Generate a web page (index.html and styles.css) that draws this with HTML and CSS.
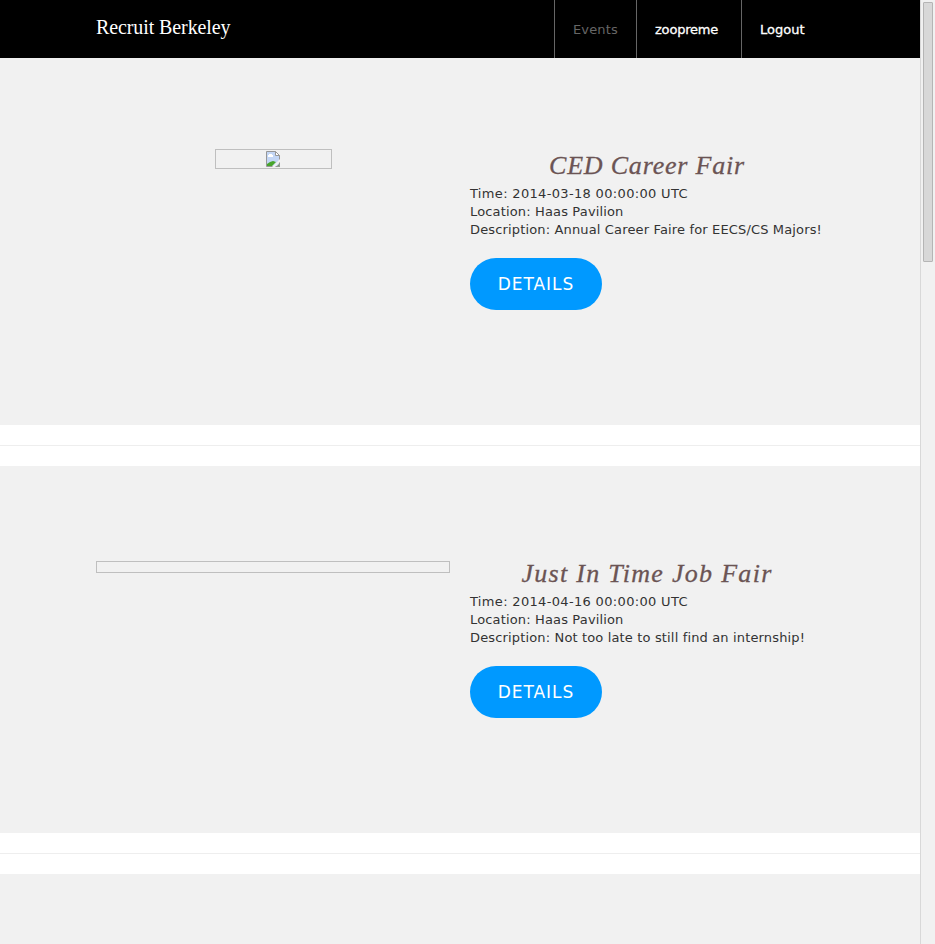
FILE: index.html
```html
<!DOCTYPE html>
<html lang="en">
<head>
<meta charset="utf-8">
<title>Recruit Berkeley</title>
<link rel="stylesheet" href="styles.css">
</head>
<body>
<div class="window">
  <div class="page">
    <header class="navbar">
      <a class="brand">Recruit Berkeley</a>
      <nav class="menu">
        <a class="item item-events active">Events</a>
        <a class="item item-user">zoopreme</a>
        <a class="item item-logout">Logout</a>
      </nav>
    </header>
    <section class="event">
      <div class="media">
        <div class="missing missing-small">
          <svg width="14" height="16" viewBox="0 0 14 16">
            <path d="M.5.5h9l4 4v11H.5z" fill="#c3d6f5" stroke="#979797"/>
            <path d="M9.500.5v4h4z" fill="#fff" stroke="#979797"/>
            <path d="M2 6V4h1V3h3v1h1v2z" fill="#fff"/>
            <path d="M1 15v-2l3-2 3-1 3 1-4 4z" fill="#48a52c"/>
            <path d="M6 16l4-4 4-4v3l-5 5z" fill="#f1f1f1"/>
            <path d="M11 15.500h2.500V13z" fill="#48a52c" stroke="#979797"/>
          </svg>
        </div>
      </div>
      <div class="info">
        <h2 class="title title-ced">CED Career Fair</h2>
        <p class="line line-time">Time: 2014-03-18 00:00:00 UTC</p>
        <p class="line">Location: Haas Pavilion</p>
        <p class="line">Description: Annual Career Faire for EECS/CS Majors!</p>
        <a class="button">DETAILS</a>
      </div>
    </section>
    <hr class="divider">
    <section class="event">
      <div class="media media-wide"><div class="missing missing-wide"></div></div>
      <div class="info">
        <h2 class="title">Just In Time Job Fair</h2>
        <p class="line line-time">Time: 2014-04-16 00:00:00 UTC</p>
        <p class="line">Location: Haas Pavilion</p>
        <p class="line">Description: Not too late to still find an internship!</p>
        <a class="button">DETAILS</a>
      </div>
    </section>
    <hr class="divider">
    <section class="event"></section>
  </div>
  <div class="scrollbar"><div class="thumb"></div></div>
</div>
</body>
</html>
```
FILE: styles.css
```css
* { box-sizing: border-box; }
body { margin: 0; overflow: hidden; background: #fff; color: #333; font: 13px/18px "DejaVu Sans", Verdana, sans-serif; }
.window { display: flex; height: 944px; overflow: hidden; }
.page { width: 920px; height: 944px; overflow: hidden; }
.navbar { display: flex; justify-content: space-between; height: 58px; padding: 0 96px; background: #000; color: #fff; }
.brand { padding-top: 16px; font: 20px/22px "Liberation Serif", "Times New Roman", serif; letter-spacing: -0.1px; white-space: nowrap; }
.menu { display: flex; }
.item { border-left: 1px solid #666; padding: 21px 0 0 18px; white-space: nowrap; -webkit-text-stroke: 0.3px #fff; }
.item-events { width: 82px; }
.item-user { width: 105px; letter-spacing: -0.2px; }
.item-logout { width: 83px; }
.active { color: #666; -webkit-text-stroke: 0; letter-spacing: 0.15px; }
.event { display: flex; gap: 20px; height: 367px; padding: 91px 96px 0; background: #f1f1f1; }
.media { display: flex; justify-content: center; align-items: flex-start; width: 354px; }
.media-wide { padding-top: 4px; }
.missing { border: 1px solid #bfbfbf; }
.missing-small { display: flex; justify-content: center; width: 117px; height: 20px; padding-top: 1px; }
.missing-wide { width: 354px; height: 12px; }
.info { width: 354px; }
.title { margin: 0; height: 36px; font: italic 26px/34px "Liberation Serif", Georgia, serif; letter-spacing: 1.3px; color: #6b5454; text-align: center; -webkit-text-stroke: 0.3px #6b5454; }
.title-ced { letter-spacing: 0.8px; }
.line { margin: 0; white-space: nowrap; letter-spacing: 0.15px; }
.line-time { letter-spacing: 0.33px; }
.button { display: block; width: 132px; height: 52px; margin-top: 19px; border-radius: 26px; background: #09f; color: #fff; font-size: 17px; line-height: 52px; text-align: center; letter-spacing: 0.95px; }
.divider { height: 1px; margin: 20px 0; border: 0; background: #eee; }
.scrollbar { width: 15px; height: 944px; border-left: 1px solid #d8d8d8; background: #f1f1f1; padding: 2px; }
.thumb { width: 10px; height: 260px; border: 1px solid #b5b5b5; border-radius: 1px; background: #d8d8d8; }
```
